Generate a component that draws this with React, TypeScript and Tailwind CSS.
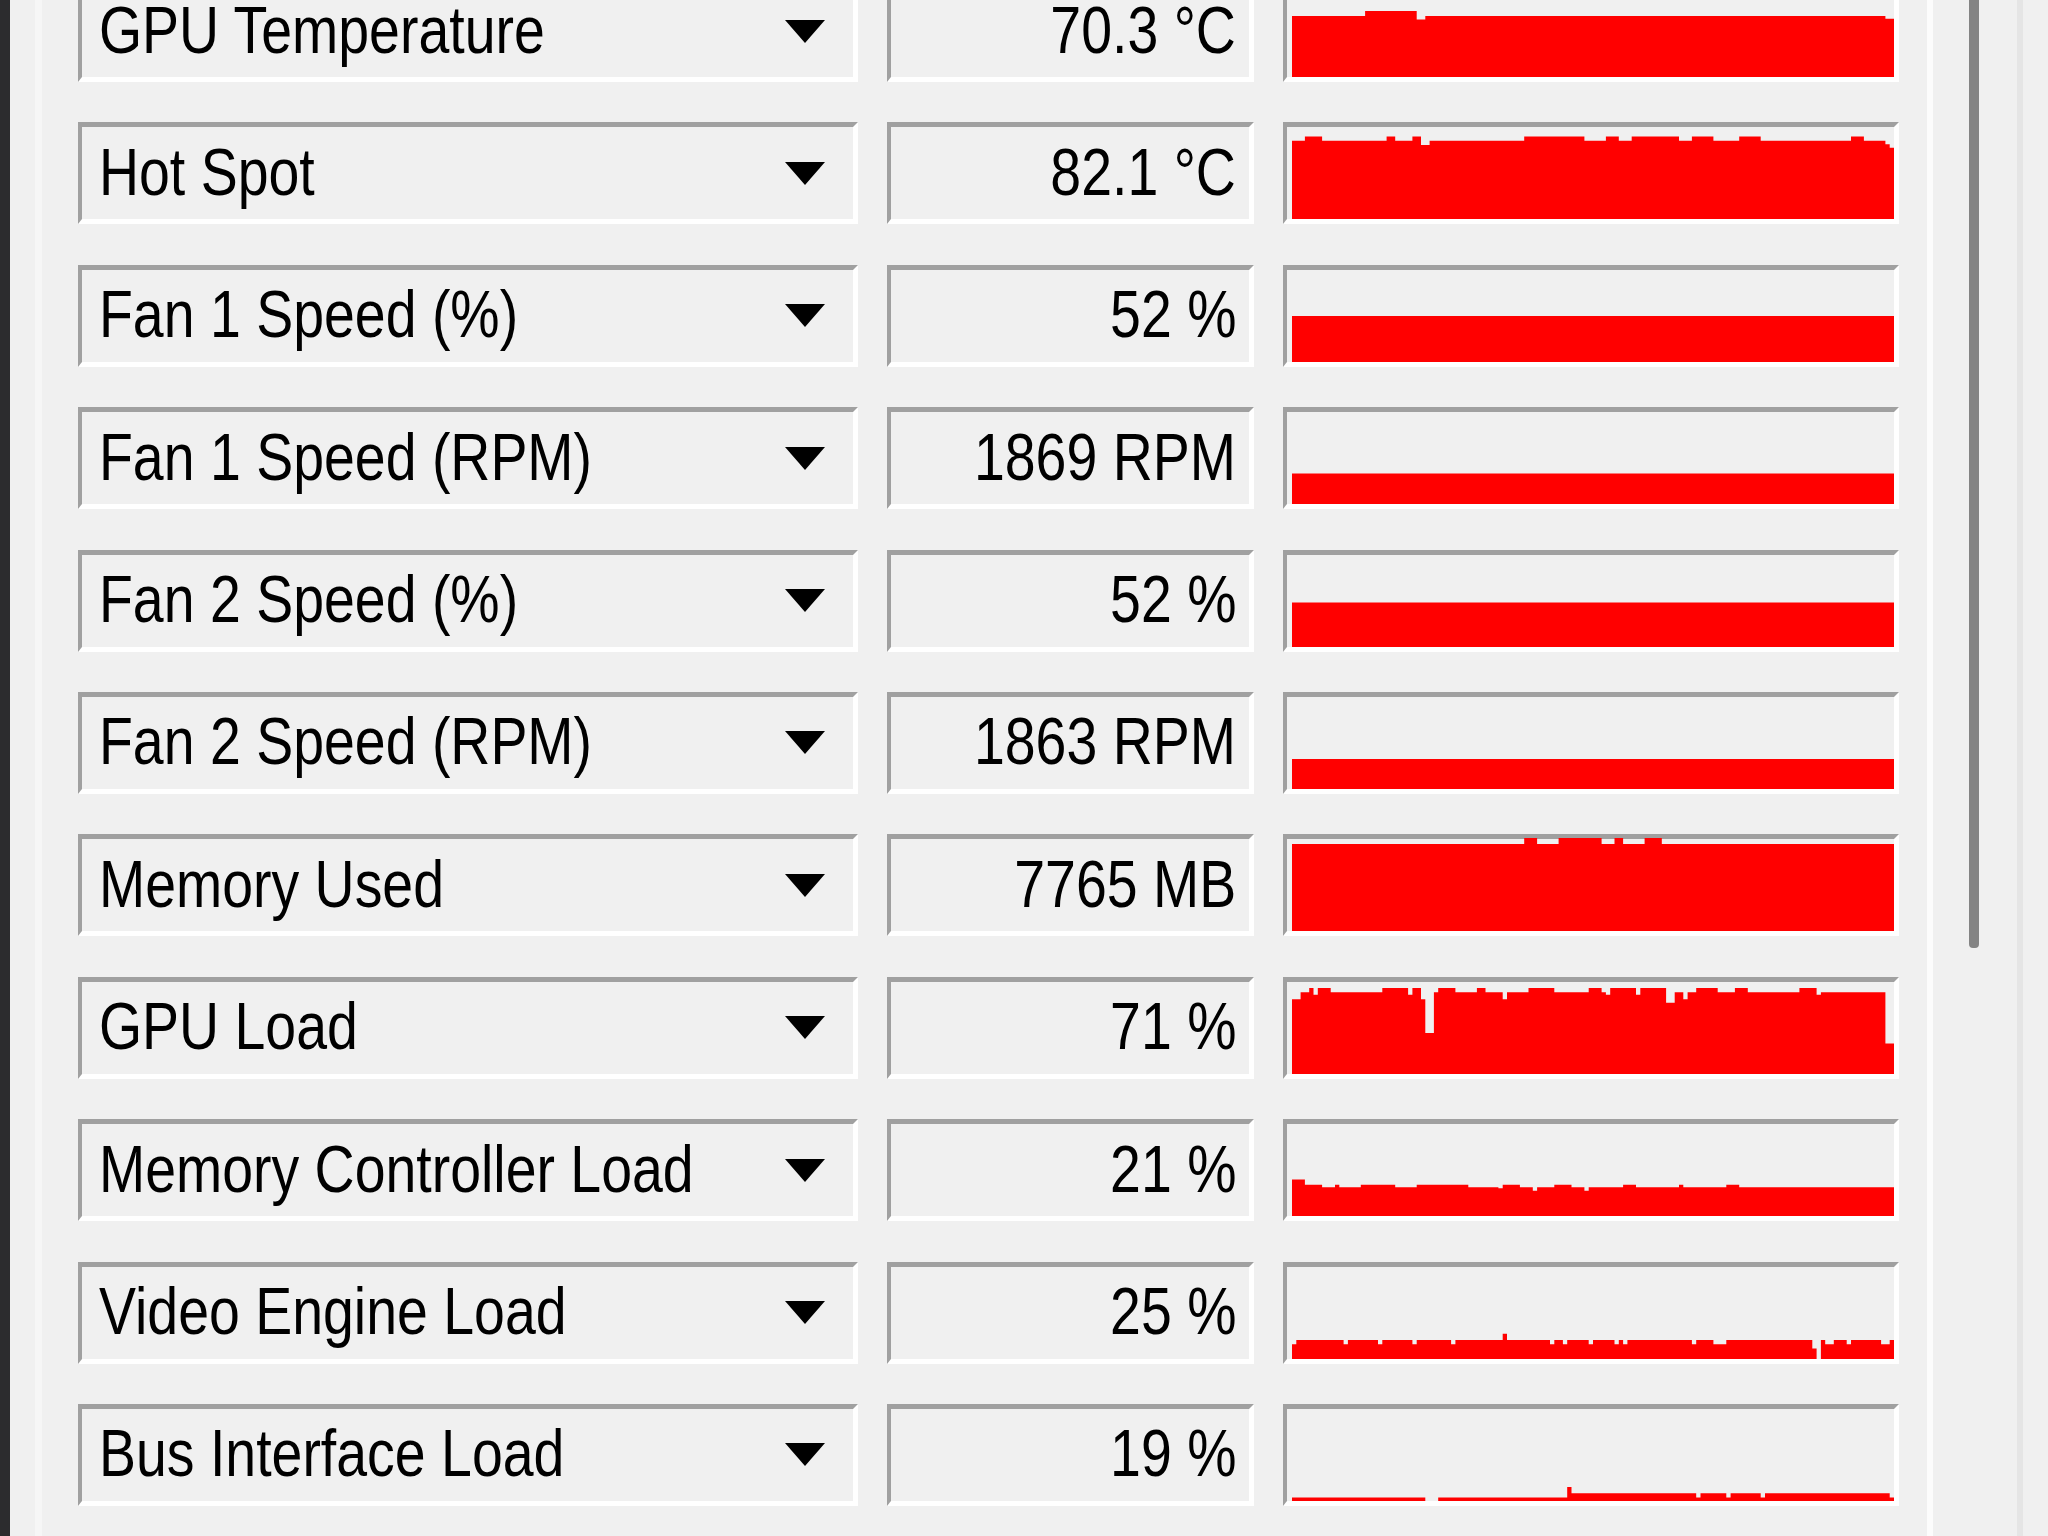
import React from 'react'

// sensor history: one sample per column, value is the fill level 0..1
const SAMPLES = 140
const GRAPH_W = 602
const GRAPH_H = 87

function rand(seed: number) {
  let s = seed
  return () => {
    s = (s * 16807) % 2147483647
    return (s - 1) / 2147483646
  }
}

function flat(level: number) {
  return Array.from({ length: SAMPLES }, () => level)
}

function runs(seed: number, low: number, high: number, pHigh: number) {
  const r = rand(seed)
  const out: number[] = []
  let level = low
  while (out.length < SAMPLES) {
    const len = 1 + Math.floor(r() * 5)
    for (let i = 0; i < len && out.length < SAMPLES; i++) out.push(level)
    level = r() < pHigh ? high : low
  }
  return out
}

function notch(values: number[], seed: number, depth: number, p: number) {
  const r = rand(seed)
  return values.map((v) => (r() < p ? v - depth : v))
}

const gpuTemp = flat(0.7).map((v, i) => {
  if (i >= 17 && i <= 28) return 0.76
  if (i >= 29 && i <= 30) return 0.66
  if (i >= SAMPLES - 2) return 0.67
  return v
})

const hotSpot = runs(7, 0.9, 0.95, 0.35).map((v, i) => {
  if (i >= 30 && i <= 31) return 0.85
  if (i === SAMPLES - 2) return 0.86
  if (i === SAMPLES - 1) return 0.82
  return v
})

const memUsed = flat(1).map((v, i) => {
  if ((i >= 54 && i <= 56) || (i >= 62 && i <= 71) || (i >= 75 && i <= 76) || (i >= 82 && i <= 85)) return 1.07
  return v
})

const gpuLoad = notch(runs(19, 0.94, 0.99, 0.4), 23, 0.08, 0.07).map((v, i) => {
  if (i >= 31 && i <= 32) return 0.47
  if (i === 30) return 0.86
  if (i === 87 || i === 88) return 0.82
  if (i >= SAMPLES - 2) return 0.35
  return v
})

const mcLoad = notch(runs(31, 0.33, 0.36, 0.3), 37, 0.04, 0.1).map((v, i) => (i < 3 ? 0.42 : v))

const veLoad = notch(flat(0.22), 41, 0.05, 0.12).map((v, i) => {
  if (i === 49) return 0.29
  if (i === 121) return 0.12
  if (i === 122) return 0
  return v
})

const busLoad = flat(0.04).map((v, i) => {
  if (i >= 31 && i <= 33) return 0
  if (i === 64) return 0.16
  if (i > 64) {
    if (i === 94 || i === 101 || i === 109) return 0.04
    if (i === SAMPLES - 1) return 0.04
    return 0.09
  }
  return v
})

type Sensor = { name: string; value: string; series: number[] }

const sensors: Sensor[] = [
  { name: 'GPU Temperature', value: '70.3 °C', series: gpuTemp },
  { name: 'Hot Spot', value: '82.1 °C', series: hotSpot },
  { name: 'Fan 1 Speed (%)', value: '52 %', series: flat(0.53) },
  { name: 'Fan 1 Speed (RPM)', value: '1869 RPM', series: flat(0.35) },
  { name: 'Fan 2 Speed (%)', value: '52 %', series: flat(0.51) },
  { name: 'Fan 2 Speed (RPM)', value: '1863 RPM', series: flat(0.345) },
  { name: 'Memory Used', value: '7765 MB', series: memUsed },
  { name: 'GPU Load', value: '71 %', series: gpuLoad },
  { name: 'Memory Controller Load', value: '21 %', series: mcLoad },
  { name: 'Video Engine Load', value: '25 %', series: veLoad },
  { name: 'Bus Interface Load', value: '19 %', series: busLoad },
]

function areaPath(values: number[]) {
  const dx = GRAPH_W / values.length
  let d = `M0 ${GRAPH_H}`
  values.forEach((v, i) => {
    const y = (GRAPH_H * (1 - v)).toFixed(1)
    d += ` L${(i * dx).toFixed(1)} ${y} L${((i + 1) * dx).toFixed(1)} ${y}`
  })
  return d + ` L${GRAPH_W} ${GRAPH_H} Z`
}

const sunken =
  'h-full border-t-[5px] border-l-4 border-b-[5px] border-r-[5px] border-t-[#a0a0a0] border-l-[#a0a0a0] border-b-white border-r-white bg-[#f0f0f0]'

function SensorRow({ sensor }: { sensor: Sensor }) {
  return (
    <div className="flex h-[102px] shrink-0">
      <div className={`${sunken} flex w-[780px] items-center pl-[17px]`}>
        <div className="min-w-0 flex-1 pb-[3px]">
          <span className="inline-block origin-left scale-x-[0.84] whitespace-nowrap">{sensor.name}</span>
        </div>
        <svg className="mr-[28px] shrink-0" width="40" height="23" viewBox="0 0 40 23">
          <polygon points="0,0 40,0 20,23" fill="#000" />
        </svg>
      </div>
      <div className={`${sunken} ml-[29px] flex w-[367px] items-center justify-end pr-[13px] pb-[3px]`}>
        <span className="inline-block origin-right scale-x-[0.84] whitespace-nowrap">{sensor.value}</span>
      </div>
      <div className={`${sunken} ml-[29px] w-[616px] pl-[5px] pt-[5px]`}>
        <svg className="block overflow-visible" width={GRAPH_W} height={GRAPH_H} viewBox={`0 0 ${GRAPH_W} ${GRAPH_H}`}>
          <path d={areaPath(sensor.series)} fill="#ff0000" />
        </svg>
      </div>
    </div>
  )
}

export default function App() {
  return (
    <div
      className="flex h-[1536px] w-[2048px] overflow-hidden bg-[#f0f0f0] text-[66px] leading-none text-black"
      style={{ fontFamily: '"Liberation Sans", Arial, sans-serif' }}
    >
      <div className="w-[10px] shrink-0 bg-[#2c2c2e]" />
      <div className="ml-[25px] w-[7px] shrink-0 bg-[#f6f6f6]" />
      <div className="ml-[36px] -mt-[20px] flex w-[1821px] shrink-0 flex-col gap-y-[40.4px]">
        {sensors.map((s) => (
          <SensorRow key={s.name} sensor={s} />
        ))}
      </div>
      {/* scrollbar strip */}
      <div className="ml-[28px] w-[6px] shrink-0 bg-[#fcfcfc]" />
      <div className="ml-[36px] h-[948px] w-[10px] shrink-0 rounded-b-[4px] bg-[#848484]" />
      <div className="ml-[38px] w-[6px] shrink-0 bg-[#e5e5e5]" />
    </div>
  )
}
